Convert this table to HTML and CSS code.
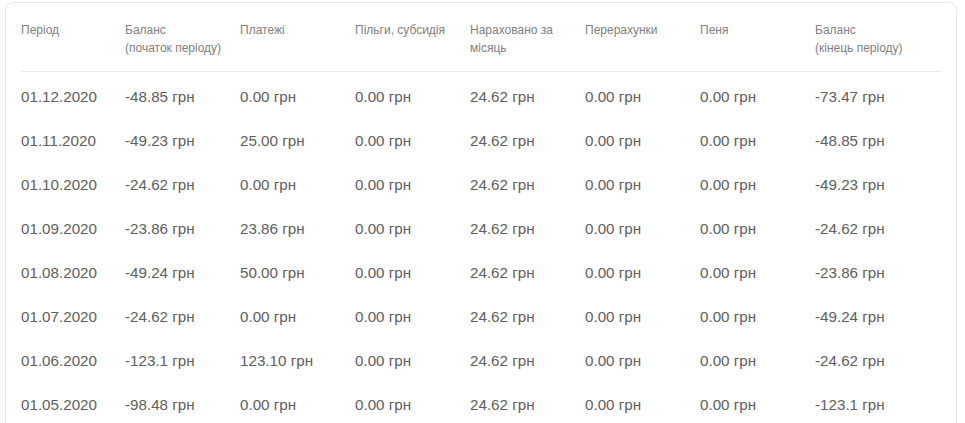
FILE: index.html
```html
<!DOCTYPE html>
<html lang="uk">
<head>
<meta charset="utf-8">
<link rel="stylesheet" href="styles.css">
</head>
<body>
<div class="card">
  <table class="tbl">
    <colgroup>
      <col class="c1"><col class="cn"><col class="cn"><col class="cn"><col class="cn"><col class="cn"><col class="cn"><col class="cl">
    </colgroup>
    <thead>
      <tr>
        <th>Період</th>
        <th>Баланс<br>(початок періоду)</th>
        <th>Платежі</th>
        <th>Пільги, субсидія</th>
        <th>Нараховано за<br>місяць</th>
        <th>Перерахунки</th>
        <th>Пеня</th>
        <th>Баланс<br>(кінець періоду)</th>
      </tr>
    </thead>
    <tbody>
      <tr><td>01.12.2020</td><td>-48.85 грн</td><td>0.00 грн</td><td>0.00 грн</td><td>24.62 грн</td><td>0.00 грн</td><td>0.00 грн</td><td>-73.47 грн</td></tr>
      <tr><td>01.11.2020</td><td>-49.23 грн</td><td>25.00 грн</td><td>0.00 грн</td><td>24.62 грн</td><td>0.00 грн</td><td>0.00 грн</td><td>-48.85 грн</td></tr>
      <tr><td>01.10.2020</td><td>-24.62 грн</td><td>0.00 грн</td><td>0.00 грн</td><td>24.62 грн</td><td>0.00 грн</td><td>0.00 грн</td><td>-49.23 грн</td></tr>
      <tr><td>01.09.2020</td><td>-23.86 грн</td><td>23.86 грн</td><td>0.00 грн</td><td>24.62 грн</td><td>0.00 грн</td><td>0.00 грн</td><td>-24.62 грн</td></tr>
      <tr><td>01.08.2020</td><td>-49.24 грн</td><td>50.00 грн</td><td>0.00 грн</td><td>24.62 грн</td><td>0.00 грн</td><td>0.00 грн</td><td>-23.86 грн</td></tr>
      <tr><td>01.07.2020</td><td>-24.62 грн</td><td>0.00 грн</td><td>0.00 грн</td><td>24.62 грн</td><td>0.00 грн</td><td>0.00 грн</td><td>-49.24 грн</td></tr>
      <tr><td>01.06.2020</td><td>-123.1 грн</td><td>123.10 грн</td><td>0.00 грн</td><td>24.62 грн</td><td>0.00 грн</td><td>0.00 грн</td><td>-24.62 грн</td></tr>
      <tr><td>01.05.2020</td><td>-98.48 грн</td><td>0.00 грн</td><td>0.00 грн</td><td>24.62 грн</td><td>0.00 грн</td><td>0.00 грн</td><td>-123.1 грн</td></tr>
    </tbody>
  </table>
</div>
</body>
</html>
```

FILE: styles.css
```css
html, body {
  margin: 0;
  padding: 0;
  background: #ffffff;
}
body {
  font-family: "Liberation Sans", Arial, sans-serif;
  overflow: hidden;
}
.card {
  margin: 2px 0 0 5px;
  width: 952px;
  box-sizing: border-box;
  border: 1px solid #e6e6e6;
  border-radius: 8px;
  padding: 0 15px 20px;
  background: #fff;
}
.tbl {
  width: 920px;
  border-collapse: collapse;
  table-layout: fixed;
}
.c1 { width: 104px; }
.cn { width: 115px; }
.cl { width: 126px; }
.tbl th {
  text-align: left;
  vertical-align: top;
  font-weight: normal;
  font-size: 12px;
  line-height: 18px;
  color: #808080;
  padding: 18px 0 14px;
  border-bottom: 1px solid #e8e8e8;
}
.tbl td {
  font-size: 15.2px;
  line-height: 20px;
  color: #606060;
  padding: 15px 0 9px;
  white-space: nowrap;
}
```
